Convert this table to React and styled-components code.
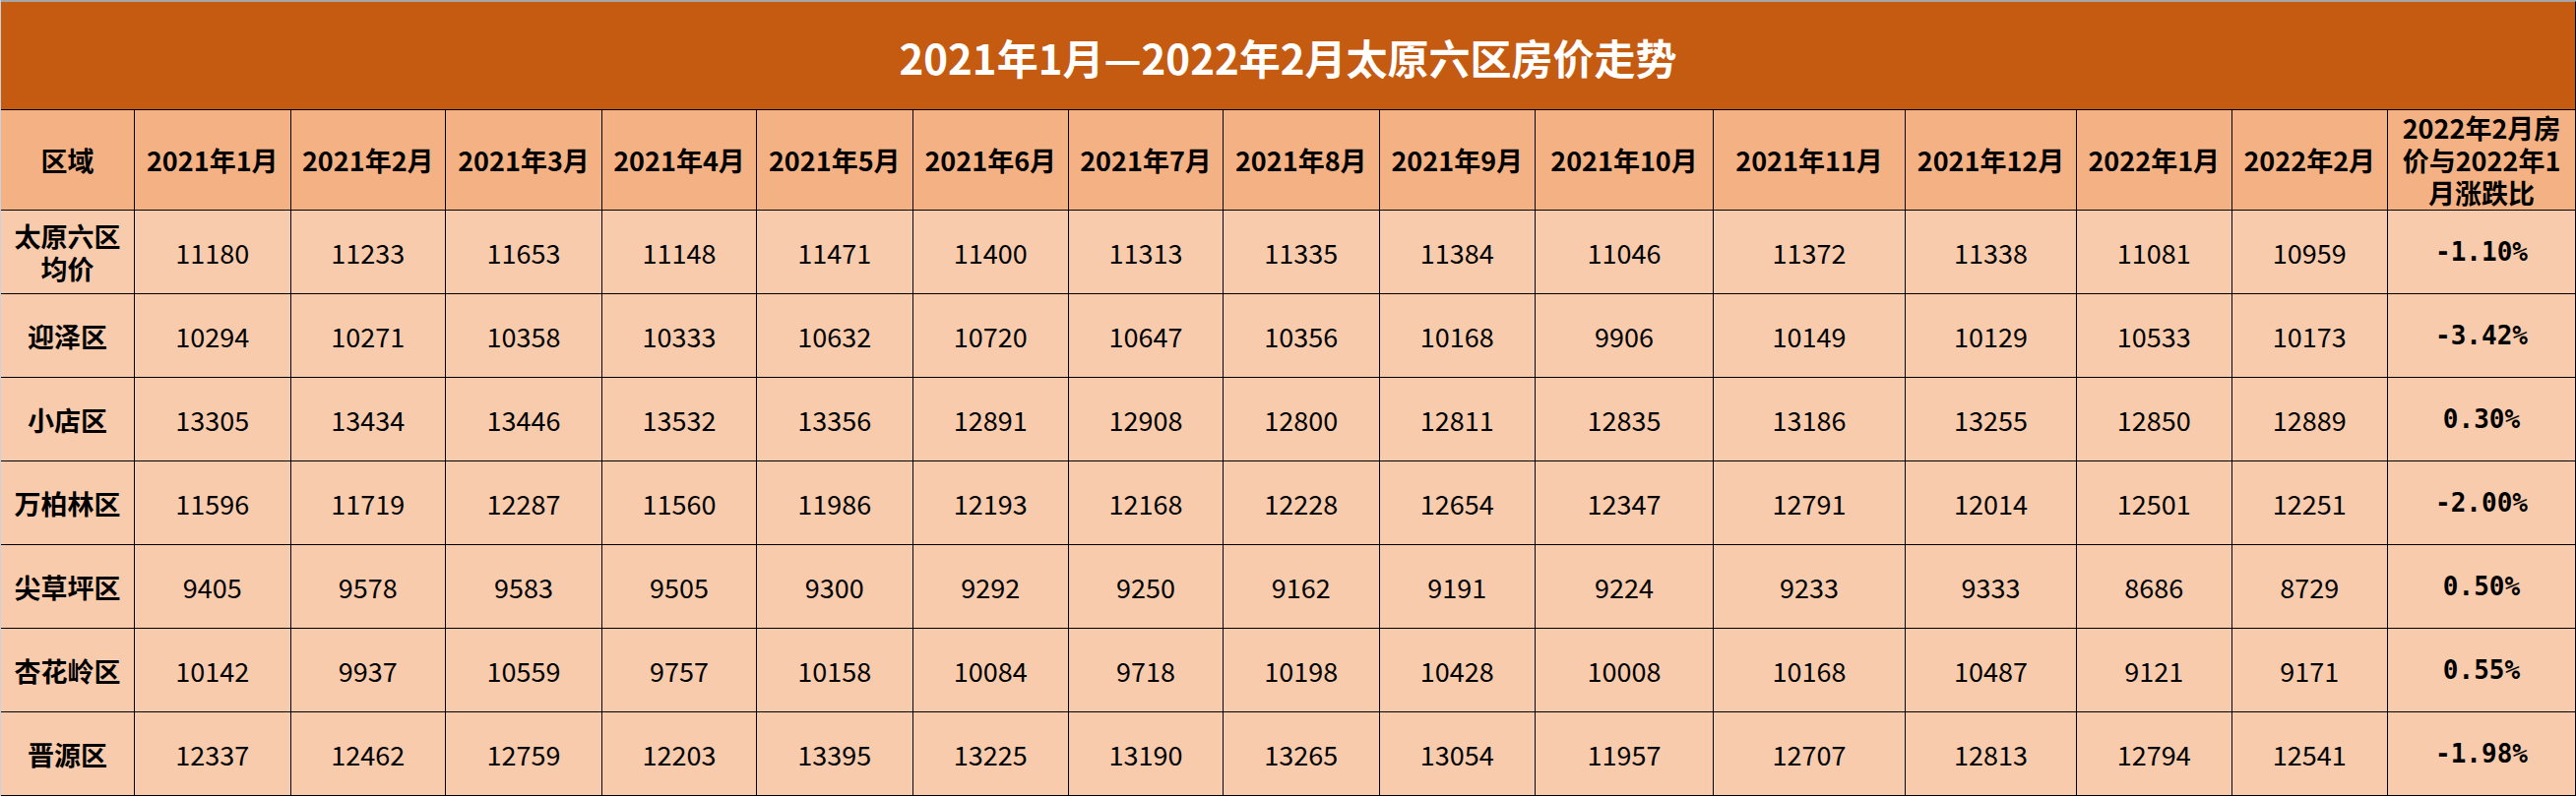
import React from "react";
import styled, { createGlobalStyle } from "styled-components";

const GlobalStyle = createGlobalStyle`
  html, body {
    margin: 0;
    padding: 0;
    background: #ffffff;
  }
  body {
    font-family: "Noto Sans CJK SC", "Noto Sans", sans-serif;
  }
`;

const COLUMNS = [
  136, 158.5, 157.5, 159, 157, 158.5, 158.5, 157, 158.5, 158.5, 181, 195, 174,
  157.5, 158.5, 192,
];

const MONTHS = [
  "2021年1月",
  "2021年2月",
  "2021年3月",
  "2021年4月",
  "2021年5月",
  "2021年6月",
  "2021年7月",
  "2021年8月",
  "2021年9月",
  "2021年10月",
  "2021年11月",
  "2021年12月",
  "2022年1月",
  "2022年2月",
];

const ROWS = [
  {
    name: ["太原六区", "均价"],
    prices: [11180, 11233, 11653, 11148, 11471, 11400, 11313, 11335, 11384, 11046, 11372, 11338, 11081, 10959],
    change: "-1.10%",
  },
  {
    name: ["迎泽区"],
    prices: [10294, 10271, 10358, 10333, 10632, 10720, 10647, 10356, 10168, 9906, 10149, 10129, 10533, 10173],
    change: "-3.42%",
  },
  {
    name: ["小店区"],
    prices: [13305, 13434, 13446, 13532, 13356, 12891, 12908, 12800, 12811, 12835, 13186, 13255, 12850, 12889],
    change: "0.30%",
  },
  {
    name: ["万柏林区"],
    prices: [11596, 11719, 12287, 11560, 11986, 12193, 12168, 12228, 12654, 12347, 12791, 12014, 12501, 12251],
    change: "-2.00%",
  },
  {
    name: ["尖草坪区"],
    prices: [9405, 9578, 9583, 9505, 9300, 9292, 9250, 9162, 9191, 9224, 9233, 9333, 8686, 8729],
    change: "0.50%",
  },
  {
    name: ["杏花岭区"],
    prices: [10142, 9937, 10559, 9757, 10158, 10084, 9718, 10198, 10428, 10008, 10168, 10487, 9121, 9171],
    change: "0.55%",
  },
  {
    name: ["晋源区"],
    prices: [12337, 12462, 12759, 12203, 13395, 13225, 13190, 13265, 13054, 11957, 12707, 12813, 12794, 12541],
    change: "-1.98%",
  },
];

const Sheet = styled.div`
  display: grid;
  grid-template-columns: ${COLUMNS.map((w) => `${w}px`).join(" ")};
  grid-template-rows: 112px 102px repeat(7, 85px);
  width: 2617px;
  border-left: 1px solid #c9d2e3;
  box-sizing: border-box;
`;

const Title = styled.div`
  grid-column: 1 / -1;
  display: flex;
  align-items: center;
  justify-content: center;
  background: #c55a11;
  color: #ffffff;
  font-size: 42px;
  font-weight: 700;
  border-top: 2px solid #a6a6a6;
  border-bottom: 1px solid #000000;
  border-right: 2px solid #000000;
  box-sizing: border-box;
  padding-top: 2px;
`;

const Cell = styled.div`
  display: flex;
  flex-direction: column;
  align-items: center;
  justify-content: center;
  text-align: center;
  box-sizing: border-box;
  background: ${(p) => (p.$head ? "#f4b183" : "#f8cbad")};
  color: #000000;
  border-bottom: 1px solid #000000;
  border-right: ${(p) => (p.$last ? "2px" : "1px")} solid #000000;
  font-size: 27px;
  font-weight: ${(p) => (p.$head || p.$label ? 700 : 400)};
  line-height: 33px;
  white-space: nowrap;
`;

const Line = styled.span`
  display: block;
  height: 33px;
  line-height: 33px;
`;

const Change = styled.span`
  font-family: "DejaVu Sans Mono", "Liberation Mono", monospace;
  font-size: 26px;
  font-weight: 700;
`;

export default function App() {
  return (
    <>
      <GlobalStyle />
      <Sheet>
        <Title>2021年1月—2022年2月太原六区房价走势</Title>

        <Cell $head>区域</Cell>
        {MONTHS.map((m) => (
          <Cell $head key={m}>
            {m}
          </Cell>
        ))}
        <Cell $head $last>
          <Line>2022年2月房</Line>
          <Line>价与2022年1</Line>
          <Line>月涨跌比</Line>
        </Cell>

        {ROWS.map((row) => (
          <React.Fragment key={row.name.join("")}>
            <Cell $label>
              {row.name.map((line) => (
                <Line key={line}>{line}</Line>
              ))}
            </Cell>
            {row.prices.map((price, i) => (
              <Cell key={i}>{price}</Cell>
            ))}
            <Cell $last>
              <Change>{row.change}</Change>
            </Cell>
          </React.Fragment>
        ))}
      </Sheet>
    </>
  );
}
